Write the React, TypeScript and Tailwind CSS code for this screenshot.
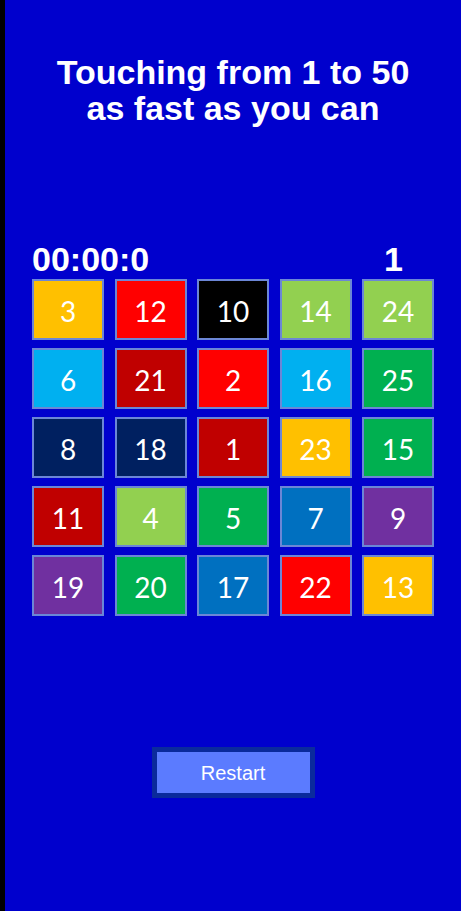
const TILES: { n: number; c: string }[] = [
  { n: 3, c: "bg-[#ffc000]" },
  { n: 12, c: "bg-[#ff0000]" },
  { n: 10, c: "bg-[#000000]" },
  { n: 14, c: "bg-[#92d050]" },
  { n: 24, c: "bg-[#92d050]" },
  { n: 6, c: "bg-[#00b0f0]" },
  { n: 21, c: "bg-[#c00000]" },
  { n: 2, c: "bg-[#ff0000]" },
  { n: 16, c: "bg-[#00b0f0]" },
  { n: 25, c: "bg-[#00b050]" },
  { n: 8, c: "bg-[#002060]" },
  { n: 18, c: "bg-[#002060]" },
  { n: 1, c: "bg-[#c00000]" },
  { n: 23, c: "bg-[#ffc000]" },
  { n: 15, c: "bg-[#00b050]" },
  { n: 11, c: "bg-[#c00000]" },
  { n: 4, c: "bg-[#92d050]" },
  { n: 5, c: "bg-[#00b050]" },
  { n: 7, c: "bg-[#0070c0]" },
  { n: 9, c: "bg-[#7030a0]" },
  { n: 19, c: "bg-[#7030a0]" },
  { n: 20, c: "bg-[#00b050]" },
  { n: 17, c: "bg-[#0070c0]" },
  { n: 22, c: "bg-[#ff0000]" },
  { n: 13, c: "bg-[#ffc000]" },
];

export default function App() {
  return (
    <div className="min-h-screen bg-black pl-[5px]">
      <div className="min-h-[911px] bg-[#0000cd] flex flex-col items-center font-['Liberation_Sans',Arial,sans-serif] text-white">
        <h1 className="mt-[54px] text-center text-[34px] leading-[36px] font-bold">
          Touching from 1 to 50
          <br />
          as fast as you can
        </h1>

        <div className="mt-[116px] w-[402px] flex justify-between text-[34px] leading-[34px] font-bold">
          <span>00:00:0</span>
          <span className="pr-[31px]">1</span>
        </div>

        <div className="mt-[3px] w-[402px] grid grid-cols-5 gap-x-[10.5px] gap-y-[8px]">
          {TILES.map((t) => (
            <button
              key={t.n}
              type="button"
              className={`h-[61px] border-2 border-[#6b86d6] ${t.c} flex items-center justify-center pt-[2px] text-[28px] text-white font-['Lato','Open_Sans',sans-serif]`}
            >
              {t.n}
            </button>
          ))}
        </div>

        <button
          type="button"
          className="mt-[131px] w-[163px] h-[51px] border-[5px] border-[#0a2a9c] bg-[#5b7bff] text-[20px] text-white"
        >
          Restart
        </button>
      </div>
    </div>
  );
}
